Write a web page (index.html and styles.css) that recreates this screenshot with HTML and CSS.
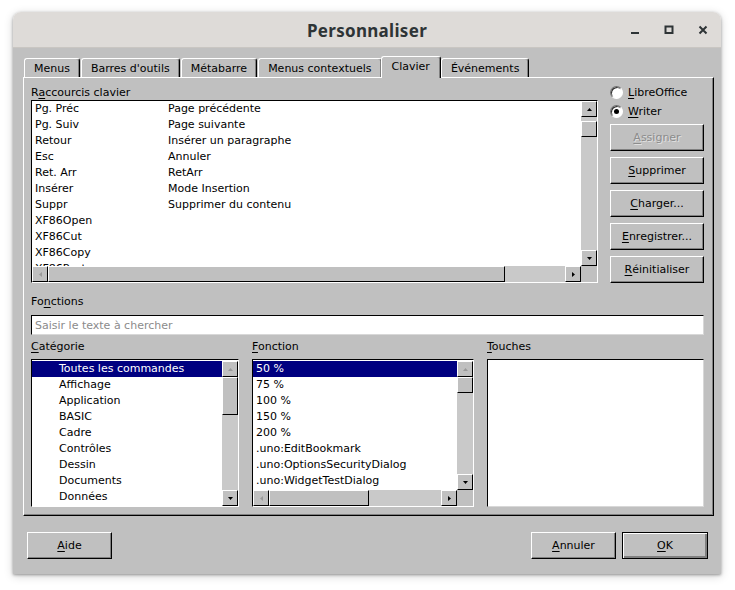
FILE: index.html
```html
<!DOCTYPE html>
<html lang="fr">
<head>
<meta charset="utf-8">
<title>Personnaliser</title>
<link rel="stylesheet" href="styles.css">
</head>
<body>
<div class="window">
  <div class="titlebar">
    <div class="title">Personnaliser</div>
    <div class="controls">
      <div class="ctl"><svg width="10" height="10" viewBox="0 0 10 10"><rect x="1" y="7" width="8" height="2" fill="#2e3436"/></svg></div>
      <div class="ctl"><svg width="10" height="10" viewBox="0 0 10 10"><rect x="1.5" y="1.5" width="7" height="6.5" fill="none" stroke="#2e3436" stroke-width="2"/></svg></div>
      <div class="ctl"><svg width="10" height="10" viewBox="0 0 10 10"><path d="M1.5 1.5 L8.5 8.5 M8.5 1.5 L1.5 8.5" stroke="#2e3436" stroke-width="2"/></svg></div>
    </div>
  </div>
  <div class="content">
    <div class="tabs">
      <div class="tab">Menus</div>
      <div class="tab">Barres d'outils</div>
      <div class="tab">Métabarre</div>
      <div class="tab">Menus contextuels</div>
      <div class="tab active">Clavier</div>
      <div class="tab">Événements</div>
    </div>
    <div class="panel">
      <div class="top">
        <div class="shortcuts">
          <div class="label">R<u>a</u>ccourcis clavier</div>
          <div class="listbox lb-sc">
            <div class="rows">
              <div class="row two"><span>Pg. Préc</span><span>Page précédente</span></div>
              <div class="row two"><span>Pg. Suiv</span><span>Page suivante</span></div>
              <div class="row two"><span>Retour</span><span>Insérer un paragraphe</span></div>
              <div class="row two"><span>Esc</span><span>Annuler</span></div>
              <div class="row two"><span>Ret. Arr</span><span>RetArr</span></div>
              <div class="row two"><span>Insérer</span><span>Mode Insertion</span></div>
              <div class="row two"><span>Suppr</span><span>Supprimer du contenu</span></div>
              <div class="row two"><span>XF86Open</span><span></span></div>
              <div class="row two"><span>XF86Cut</span><span></span></div>
              <div class="row two"><span>XF86Copy</span><span></span></div>
              <div class="row two"><span>XF86Paste</span><span></span></div>
            </div>
            <div class="vscroll">
              <div class="sbtn"><svg width="5" height="3" viewBox="0 0 5 3"><path d="M0 3 L2.5 0 L5 3 Z" fill="#000"/></svg></div>
              <div class="thumb vthumb-sc"></div>
              <div class="fill"></div>
              <div class="sbtn"><svg width="5" height="3" viewBox="0 0 5 3"><path d="M0 0 L5 0 L2.5 3 Z" fill="#000"/></svg></div>
            </div>
            <div class="hscroll">
              <div class="sbtn"><svg width="3" height="5" viewBox="0 0 3 5"><path d="M3 0 L0 2.5 L3 5 Z" fill="#9a9a9a"/></svg></div>
              <div class="thumb hthumb-sc"></div>
              <div class="fill"></div>
              <div class="sbtn"><svg width="3" height="5" viewBox="0 0 3 5"><path d="M0 0 L3 2.5 L0 5 Z" fill="#000"/></svg></div>
            </div>
            <div class="corner"></div>
          </div>
        </div>
        <div class="side">
          <div class="radios">
            <div class="radio"><span class="dot"></span><span><u>L</u>ibreOffice</span></div>
            <div class="radio"><span class="dot checked"></span><span><u>W</u>riter</span></div>
          </div>
          <div class="btn disabled"><u>A</u>ssigner</div>
          <div class="btn"><u>S</u>upprimer</div>
          <div class="btn"><u>C</u>harger...</div>
          <div class="btn"><u>E</u>nregistrer...</div>
          <div class="btn"><u>R</u>éinitialiser</div>
        </div>
      </div>
      <div class="label lbl-fn">Fo<u>n</u>ctions</div>
      <div class="search"><span class="placeholder">Saisir le texte à chercher</span></div>
      <div class="bottom">
        <div class="col">
          <div class="label"><u>C</u>atégorie</div>
          <div class="listbox lb-cat">
            <div class="rows">
              <div class="row ind sel">Toutes les commandes</div>
              <div class="row ind">Affichage</div>
              <div class="row ind">Application</div>
              <div class="row ind">BASIC</div>
              <div class="row ind">Cadre</div>
              <div class="row ind">Contrôles</div>
              <div class="row ind">Dessin</div>
              <div class="row ind">Documents</div>
              <div class="row ind">Données</div>
            </div>
            <div class="vscroll">
              <div class="sbtn"><svg width="5" height="3" viewBox="0 0 5 3"><path d="M0 3 L2.5 0 L5 3 Z" fill="#9a9a9a"/></svg></div>
              <div class="thumb vthumb-cat"></div>
              <div class="fill"></div>
              <div class="sbtn"><svg width="5" height="3" viewBox="0 0 5 3"><path d="M0 0 L5 0 L2.5 3 Z" fill="#000"/></svg></div>
            </div>
          </div>
        </div>
        <div class="col">
          <div class="label"><u>F</u>onction</div>
          <div class="listbox lb-fn">
            <div class="rows">
              <div class="row plain sel">50 %</div>
              <div class="row plain">75 %</div>
              <div class="row plain">100 %</div>
              <div class="row plain">150 %</div>
              <div class="row plain">200 %</div>
              <div class="row plain">.uno:EditBookmark</div>
              <div class="row plain">.uno:OptionsSecurityDialog</div>
              <div class="row plain">.uno:WidgetTestDialog</div>
            </div>
            <div class="vscroll">
              <div class="sbtn"><svg width="5" height="3" viewBox="0 0 5 3"><path d="M0 3 L2.5 0 L5 3 Z" fill="#9a9a9a"/></svg></div>
              <div class="thumb vthumb-fn"></div>
              <div class="fill"></div>
              <div class="sbtn"><svg width="5" height="3" viewBox="0 0 5 3"><path d="M0 0 L5 0 L2.5 3 Z" fill="#000"/></svg></div>
            </div>
            <div class="hscroll">
              <div class="sbtn"><svg width="3" height="5" viewBox="0 0 3 5"><path d="M3 0 L0 2.5 L3 5 Z" fill="#9a9a9a"/></svg></div>
              <div class="thumb hthumb-fn"></div>
              <div class="fill"></div>
              <div class="sbtn"><svg width="3" height="5" viewBox="0 0 3 5"><path d="M0 0 L3 2.5 L0 5 Z" fill="#000"/></svg></div>
            </div>
            <div class="corner"></div>
          </div>
        </div>
        <div class="col">
          <div class="label"><u>T</u>ouches</div>
          <div class="listbox lb-keys"></div>
        </div>
      </div>
    </div>
    <div class="footer">
      <div class="btn fbtn"><u>A</u>ide</div>
      <div class="spacer"></div>
      <div class="btn fbtn"><u>A</u>nnuler</div>
      <div class="btn fbtn default"><u>O</u>K</div>
    </div>
  </div>
</div>
</body>
</html>
```
FILE: styles.css
```css
* { box-sizing: border-box; }
html, body { margin: 0; padding: 0; }
body {
  width: 735px;
  height: 590px;
  background: #ffffff;
  font-family: "DejaVu Sans", sans-serif;
  font-size: 11px;
  color: #000;
  overflow: hidden;
}
u { text-decoration: underline; text-underline-offset: 2px; }

.window {
  margin: 12px 0 0 13px;
  width: 708px;
  height: 562px;
  border-radius: 8px 8px 0 0;
  box-shadow: 0 1px 3px rgba(0,0,0,0.35), 0 2px 10px rgba(0,0,0,0.18);
  display: flex;
  flex-direction: column;
  overflow: hidden;
}

.titlebar {
  flex: none;
  height: 36px;
  background: #dedbd8;
  border-bottom: 1px solid #c9c6c2;
  display: grid;
  grid-template-columns: 1fr auto 1fr;
  align-items: center;
}
.title {
  grid-column: 2;
  font-family: "Noto Sans", "DejaVu Sans", sans-serif;
  font-weight: 700;
  font-size: 17px;
  letter-spacing: 0.3px;
  color: #2e3436;
  padding-top: 1px;
}
.controls { grid-column: 3; justify-self: end; display: flex; padding-right: 1px; }
.ctl { width: 34px; height: 35px; display: flex; align-items: center; justify-content: center; }

.content {
  flex: 1;
  background: #c0c0c0;
  display: flex;
  flex-direction: column;
  padding: 8px 7px 0 10px;
}

.tabs {
  flex: none;
  height: 21px;
  display: flex;
  align-items: flex-end;
  padding-left: 1px;
  position: relative;
  z-index: 1;
}
.tab {
  height: 19px;
  line-height: 18px;
  padding: 1px 9px 0 9px;
  margin-right: 1px;
  border: 1px solid;
  border-color: #ffffff #000000 transparent #ffffff;
  border-bottom: none;
  border-radius: 3px 3px 0 0;
  box-shadow: inset -1px 0 #808080;
  white-space: nowrap;
}
.tab.active {
  height: 22px;
  margin: 0 0 -1px -2px;
  padding: 0 10px;
  line-height: 19px;
  background: #c0c0c0;
}

.panel {
  flex: none;
  height: 439px;
  border: 1px solid;
  border-color: #ffffff #000000 #000000 #ffffff;
  box-shadow: inset -1px -1px #808080;
  padding: 7px 9px 8px 7px;
  display: flex;
  flex-direction: column;
}

.label { height: 15px; line-height: 15px; white-space: nowrap; }

.top { display: flex; gap: 12px; height: 198px; flex: none; }
.shortcuts { width: 567px; display: flex; flex-direction: column; }
.side { width: 94px; display: flex; flex-direction: column; gap: 6px; }
.radios { display: flex; flex-direction: column; margin-top: -2px; margin-bottom: -3px; }
.radio { height: 19px; display: flex; align-items: center; gap: 5px; }
.dot {
  width: 13px; height: 13px;
  border-radius: 50%;
  background: #ffffff;
  border: 1px solid;
  border-color: #6e6e6e #ffffff #ffffff #6e6e6e;
  box-shadow: inset 1px 1px 0 #303030;
  display: flex; align-items: center; justify-content: center;
}
.dot.checked::after {
  content: "";
  width: 5px; height: 5px; border-radius: 50%;
  background: #000;
}

.btn {
  height: 27px;
  flex: none;
  display: flex;
  align-items: center;
  justify-content: center;
  background: #c0c0c0;
  border: 1px solid;
  border-color: #ffffff #000000 #000000 #ffffff;
  box-shadow: inset -1px -1px #808080;
  white-space: nowrap;
}
.btn.disabled { color: #8c8c8c; text-shadow: 1px 1px 0 #e0e0e0; }

.listbox {
  background: #ffffff;
  border: 1px solid;
  border-color: #000000 #ffffff #ffffff #000000;
  display: grid;
  overflow: hidden;
}
.lb-sc { height: 183px; grid-template-columns: 1fr 16px; grid-template-rows: 1fr 16px; }
.lb-cat { height: 148px; grid-template-columns: 1fr 16px; grid-template-rows: 1fr; padding-top: 1px; }
.lb-fn { height: 148px; grid-template-columns: 1fr 16px; grid-template-rows: 1fr 16px; padding-top: 1px; }
.lb-keys { height: 148px; border-color: #000000 #d8d8d8 #d8d8d8 #000000; }

.rows { overflow: hidden; min-height: 0; }
.row { height: 16px; line-height: 16px; white-space: nowrap; }
.row.two { display: grid; grid-template-columns: 133px 1fr; padding-left: 3px; }
.row.ind { padding-left: 27px; }
.row.plain { padding-left: 3px; }
.row.sel { background: #000080; color: #ffffff; }

.vscroll { background: #c9c9c9; display: flex; flex-direction: column; min-height: 0; }
.hscroll { background: #c9c9c9; display: flex; flex-direction: row; min-width: 0; }
.corner { background: #c0c0c0; }
.fill { flex: 1; }
.sbtn {
  width: 16px; height: 16px; flex: none;
  background: #c0c0c0;
  border: 1px solid;
  border-color: #ffffff #000000 #000000 #ffffff;
  display: flex; align-items: center; justify-content: center;
}
.thumb {
  flex: none;
  background: #c0c0c0;
  border: 1px solid;
  border-color: #ffffff #000000 #000000 #ffffff;
}
.vthumb-sc { height: 16px; margin-top: 4px; }
.vthumb-cat { height: 38px; }
.vthumb-fn { height: 16px; }
.hthumb-sc { width: 457px; }
.hthumb-fn { width: 100px; }

.lbl-fn { margin-top: 11px; }
.search {
  margin-top: 6px;
  height: 20px;
  flex: none;
  background: #ffffff;
  border: 1px solid;
  border-color: #000000 #d8d8d8 #d8d8d8 #000000;
  display: flex;
  align-items: center;
  padding-left: 3px;
}
.placeholder { color: #8b8b8b; }

.bottom {
  margin-top: 4px;
  display: grid;
  grid-template-columns: 208px 222px 1fr;
  column-gap: 13px;
}
.col { display: flex; flex-direction: column; gap: 5px; }

.footer {
  margin-top: 16px;
  display: flex;
  gap: 6px;
  padding: 0 6px 0 4px;
}
.fbtn { width: 85px; }
.default { border: 1px solid #000; box-shadow: inset 1px 1px #ffffff, inset -2px -2px #808080, inset -1px -1px #000; width: 86px; }
.spacer { flex: 1; }
```
